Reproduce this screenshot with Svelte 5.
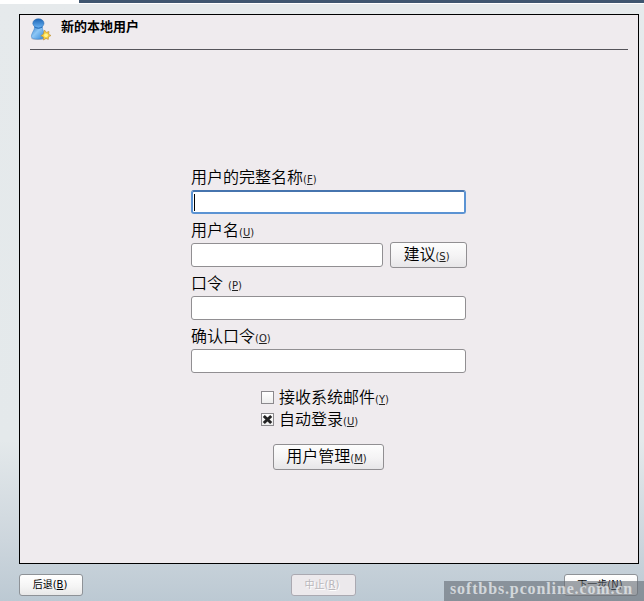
<script>
  let fullName = $state('');
  let userName = $state('');
  let password = $state('');
  let confirm = $state('');
  let receiveMail = $state(false);
  let autoLogin = $state(true);
</script>

{#snippet key(letter)}<small>(<u>{letter}</u>)</small>{/snippet}

{#snippet check(label, letter, checked, toggle)}
  <button class="check" role="checkbox" aria-checked={checked} onclick={toggle}>
    <span class="box">
      {#if checked}
        <svg width="11" height="11" viewBox="0 0 11 11"><path d="M1.800 2L9.200 9M9.200 2L1.800 9" stroke="#222" stroke-width="3" /></svg>
      {/if}
    </span>
    <span class="text">{label}{@render key(letter)}</span>
  </button>
{/snippet}

<div class="screen">
  <div class="top"><div class="dark"></div></div>
  <main class="panel">
    <header>
      <svg class="icon" width="22" height="23" viewBox="0 0 22 23">
        <defs>
          <linearGradient id="body" x1="0" y1="0" x2="1" y2="1">
            <stop offset="0" stop-color="#2674c4" />
            <stop offset=".45" stop-color="#8cc6f5" />
            <stop offset="1" stop-color="#2c83d8" />
          </linearGradient>
          <linearGradient id="head" x1="0" y1="0" x2="0" y2="1">
            <stop offset="0" stop-color="#1c64b5" />
            <stop offset="1" stop-color="#69b2f3" />
          </linearGradient>
        </defs>
        <ellipse cx="9" cy="20.500" rx="8" ry="1.600" fill="#c3c4cc" />
        <path d="M4.500 7L4.500 10Q4 12 2.500 14.500Q1.200 17 1.400 19Q2 21.200 8 21.200Q14.500 21 15 18.500Q15 15.500 13.500 13.500Q12.200 11.500 12.300 7Z" fill="url(#body)" stroke="#3a7fc6" stroke-width=".5" />
        <ellipse cx="8.400" cy="5.300" rx="5.600" ry="4.600" fill="url(#head)" stroke="#2869ad" stroke-width=".5" />
        <path d="M4.600 9.300Q8.500 11.500 12.200 9.300" fill="none" stroke="#2a72c0" stroke-width="1" />
        <path d="M14.500 12L16.200 14.400L19 13.500L18.600 16.200L21 17.500L18.500 18.800L18.300 21.400L15.800 20.400L13.500 22L13.300 19L10.800 17.800L13.200 16.200Z" fill="#f8cf3c" stroke="#b98a32" stroke-width=".6" />
        <circle cx="16" cy="17.300" r="1.900" fill="#fff58c" />
      </svg>
      <h1>新的本地用户</h1>
    </header>

    <div class="form">
      <label for="full">用户的完整名称{@render key('F')}</label>
      <div class="field focused"><i class="caret"></i><input id="full" bind:value={fullName} /></div>
      <label for="user">用户名{@render key('U')}</label>
      <div class="row">
        <div class="field"><input id="user" bind:value={userName} /></div>
        <button class="btn suggest">建议{@render key('S')}</button>
      </div>
      <label for="pw">口令 {@render key('P')}</label>
      <div class="field"><input id="pw" type="password" bind:value={password} /></div>
      <label for="pw2">确认口令{@render key('O')}</label>
      <div class="field"><input id="pw2" type="password" bind:value={confirm} /></div>
    </div>

    <div class="options">
      {@render check('接收系统邮件', 'Y', receiveMail, () => (receiveMail = !receiveMail))}
      {@render check('自动登录', 'U', autoLogin, () => (autoLogin = !autoLogin))}
    </div>
    <button class="btn manage">用户管理{@render key('M')}</button>
  </main>

  <footer>
    <button class="nav">后退(<u>B</u>)</button>
    <button class="nav off" disabled>中止(<u>R</u>)</button>
    <button class="nav next">下一步(<u>N</u>)</button>
  </footer>
  <div class="mark">softbbs.pconline.com.cn</div>
</div>

<style>
  .screen {
    position: relative;
    box-sizing: border-box;
    width: 644px;
    height: 601px;
    overflow: hidden;
    background: linear-gradient(#e6eaec 0, #e4e9eb 440px, #cdd6dd 540px, #bcc9d3 601px);
    font-family: "DejaVu Sans", "Noto Sans CJK SC", sans-serif;
    color: #000;
  }
  button, input { font-family: inherit; color: inherit; }
  .top { height: 4px; background: #fff; display: flex; justify-content: flex-end; }
  .dark { width: 565px; height: 3px; background: #3f5670; }
  .panel {
    box-sizing: border-box;
    width: 620px;
    height: 550px;
    margin: 10px 0 0 19px;
    border: 1px solid #000;
    background: #efebee;
  }
  header {
    display: flex;
    align-items: flex-start;
    box-sizing: border-box;
    height: 35px;
    margin: 0 10px;
    padding-top: 3px;
    border-bottom: 1px solid #55545a;
  }
  .icon { flex: none; }
  h1 {
    margin: 0 0 0 9px;
    font: bold 13px/16px "Noto Sans CJK SC", sans-serif;
  }
  .form { width: 276px; margin: 115px 0 0 171px; }
  label {
    display: block;
    height: 25px;
    line-height: 25px;
    font-size: 16px;
    font-weight: 350;
    white-space: pre;
  }
  small { font-size: 10px; font-weight: 400; color: #222; }
  u { text-underline-offset: 1px; text-decoration-thickness: 1px; }
  .field {
    box-sizing: border-box;
    display: flex;
    align-items: center;
    width: 275px;
    height: 24px;
    margin-bottom: 4px;
    padding-left: 3px;
    border: 1px solid #918f92;
    border-radius: 3px;
    background: #fff;
  }
  .focused { border: 2px solid #5b93d3; border-top-color: #4674ae; padding-left: 1px; }
  .caret { width: 1px; height: 17px; background: #000; }
  input { min-width: 0; flex: 1; border: 0; padding: 0; outline: 0; background: transparent; font-size: 14px; }
  .row { display: flex; align-items: center; height: 24px; margin-bottom: 4px; gap: 7px; }
  .row .field { width: 192px; margin: 0; }
  .btn {
    box-sizing: border-box;
    display: block;
    height: 26px;
    padding: 0 4px 0 0;
    border: 1px solid #918f92;
    border-radius: 3px;
    background: linear-gradient(#fdfdfd, #f4f3f4 55%, #e7e6e8);
    font-size: 16px;
    line-height: 23px;
    font-weight: 350;
    white-space: nowrap;
  }
  .suggest { flex: none; width: 77px; }
  .manage { width: 111px; margin: 12px 0 0 253px; }
  .options { margin: 15px 0 0 241px; }
  .check {
    display: flex;
    align-items: center;
    gap: 5px;
    height: 22px;
    padding: 0;
    border: 0;
    background: none;
    font-size: 16px;
    line-height: 22px;
    font-weight: 350;
    white-space: nowrap;
  }
  .box {
    box-sizing: border-box;
    display: flex;
    align-items: center;
    justify-content: center;
    width: 13px;
    height: 13px;
    margin-bottom: 4px;
    border: 1px solid #8b898d;
    background: linear-gradient(#fff, #eee);
  }
  footer { display: flex; padding: 10px 6px 0 19px; justify-content: space-between; }
  .nav {
    box-sizing: border-box;
    width: 64px;
    height: 22px;
    padding: 0 2px 0 0;
    border: 1px solid #8e9297;
    border-radius: 3px;
    background: linear-gradient(#fff, #f5f5f5 55%, #e8e8e8);
    font-size: 10px;
    line-height: 20px;
    white-space: nowrap;
  }
  .off { width: 65px; margin-left: -1px; background: #ece9ec; border-color: #aaa9b1; color: #b9b7bb; text-shadow: 1px 1px #fff; }
  .next { width: 74px; }
  .mark {
    position: absolute;
    left: 444px;
    top: 581px;
    width: 200px;
    height: 20px;
    box-sizing: border-box;
    padding-left: 6px;
    background: rgba(100, 107, 115, .6);
    color: rgba(225, 229, 232, .85);
    font: bold 16px/16px "Liberation Serif", serif;
    letter-spacing: .87px;
    white-space: nowrap;
    pointer-events: none;
  }
</style>
